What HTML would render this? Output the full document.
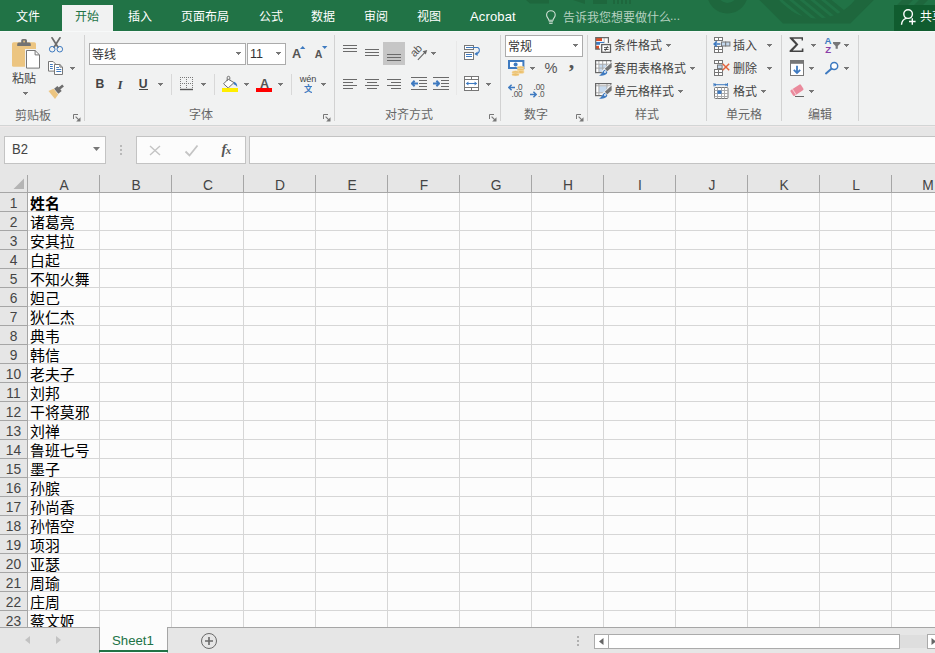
<!DOCTYPE html>
<html lang="zh-CN"><head><meta charset="utf-8"><title>Excel</title><style>
html,body{margin:0;padding:0}
html{width:935px;height:653px;overflow:hidden}
body{width:935px;height:653px;overflow:hidden;position:relative;background:#fff;font-family:"Liberation Sans",sans-serif}
#app{position:absolute;left:0;top:0;width:935px;height:653px;overflow:hidden}
.a{position:absolute;display:block}
.t{white-space:nowrap;line-height:1.15}
.ar{position:absolute;width:1px;height:1px;background:#777;box-shadow:-2px -2px #777,-1px -2px #777,0 -2px #777,1px -2px #777,2px -2px #777,-1px -1px #777,0 -1px #777,1px -1px #777}
.hc{width:40px;text-align:center;font-size:14.67px;color:#444;line-height:18px;transform:scaleX(.94)}
.rn{left:0;width:27px;text-align:center;font-size:14.67px;color:#444;line-height:18px;transform:scaleX(.94)}
.g{font-family:"Liberation Sans","Noto Sans CJK SC",sans-serif;font-size:1000px}
.gb{font-family:"Liberation Sans","Noto Sans CJK SC",sans-serif;font-size:1000px;font-weight:bold}
</style></head><body>
<div id="app">
<div class="a" style="left:0px;top:0px;width:935px;height:31px;background:#217346;"></div>
<svg class="a" style="left:500px;top:0px;" width="435" height="31" viewBox="0 0 435 31"><clipPath id="dc"><circle cx="317" cy="-29.6" r="48"/></clipPath><path d="M259.4 0L283 23.6H350.3L373.9 0Z" fill="#1e673d"/><path d="M278.2 0h4.5l30.7 25h-4.5zM288.9 0h4.5l30.7 25h-4.5zM299.6 0h4.5l30.7 25h-4.5zM310.3 0h4.5l30.7 25h-4.5zM321.0 0h4.5l30.7 25h-4.5zM331.6 0H400V25H362.3z" fill="#217346" clip-path="url(#dc)"/><circle cx="227.5" cy="-7" r="15.2" fill="none" stroke="#1e673d" stroke-width="10.5"/><g fill="#1e673d"><path d="M26 0h23v3.5H30z"/><path d="M73 0h12v4z"/><path d="M93 0h14v4H93z"/><path d="M113 0h2v4h-2zM117 0h2v4h-2zM121 0h2v4h-2zM125 0h2v4h-2zM129 0h2v4h-2z"/><path d="M402 0h11l-5 5h-11zM419 0h9l-5 5h-9z"/></g></svg>
<div class="a" style="left:62px;top:5px;width:51px;height:26px;background:#f1f2f2;"></div>
<svg class="a" role="img" aria-label="文件" style="left:16px;top:10.1px;" width="24.00" height="12.00" viewBox="0 0 2000 1000" fill="#fff"><text class="g" x="0" y="880">文件</text></svg>
<svg class="a" role="img" aria-label="开始" style="left:75px;top:10.1px;" width="24.00" height="12.00" viewBox="0 0 2000 1000" fill="#217346"><text class="g" x="0" y="880">开始</text></svg>
<svg class="a" role="img" aria-label="插入" style="left:128px;top:10.1px;" width="24.00" height="12.00" viewBox="0 0 2000 1000" fill="#fff"><text class="g" x="0" y="880">插入</text></svg>
<svg class="a" role="img" aria-label="页面布局" style="left:180.5px;top:10.1px;" width="48.00" height="12.00" viewBox="0 0 4000 1000" fill="#fff"><text class="g" x="0" y="880">页面布局</text></svg>
<svg class="a" role="img" aria-label="公式" style="left:258.5px;top:10.1px;" width="24.00" height="12.00" viewBox="0 0 2000 1000" fill="#fff"><text class="g" x="0" y="880">公式</text></svg>
<svg class="a" role="img" aria-label="数据" style="left:311px;top:10.1px;" width="24.00" height="12.00" viewBox="0 0 2000 1000" fill="#fff"><text class="g" x="0" y="880">数据</text></svg>
<svg class="a" role="img" aria-label="审阅" style="left:364px;top:10.1px;" width="24.00" height="12.00" viewBox="0 0 2000 1000" fill="#fff"><text class="g" x="0" y="880">审阅</text></svg>
<svg class="a" role="img" aria-label="视图" style="left:417px;top:10.1px;" width="24.00" height="12.00" viewBox="0 0 2000 1000" fill="#fff"><text class="g" x="0" y="880">视图</text></svg>
<span class="a t" style="left:470px;top:9.8px;font-size:13px;color:#fff;letter-spacing:.15px">Acrobat</span>
<svg class="a" role="img" aria-label="告诉我您想要做什么" style="left:563px;top:11px;" width="108.00" height="12.00" viewBox="0 0 9000 1000" fill="#b6d1c0"><text class="g" x="0" y="880">告诉我您想要做什么</text></svg>
<span class="a t" style="left:670px;top:10px;font-size:12px;color:#b6d1c0;">...</span>
<div class="a" style="left:894px;top:5px;width:41px;height:26px;background:#105c2f;"></div>
<svg class="a" role="img" aria-label="共享" style="left:920px;top:10px;" width="24.00" height="12.00" viewBox="0 0 2000 1000" fill="#fff"><text class="g" x="0" y="880">共享</text></svg>
<div class="a" style="left:0px;top:31px;width:935px;height:94px;background:#f1f2f2;"></div>
<div class="a" style="left:0px;top:31px;width:935px;height:1px;background:#f7f9f9;"></div>
<div class="a" style="left:0px;top:125px;width:935px;height:1px;background:#d3d5d5;"></div>
<div class="a" style="left:84px;top:35px;width:1px;height:86px;background:#d2d2d2;"></div>
<div class="a" style="left:334px;top:35px;width:1px;height:86px;background:#d2d2d2;"></div>
<div class="a" style="left:500px;top:35px;width:1px;height:86px;background:#d2d2d2;"></div>
<div class="a" style="left:587px;top:35px;width:1px;height:86px;background:#d2d2d2;"></div>
<div class="a" style="left:706px;top:35px;width:1px;height:86px;background:#d2d2d2;"></div>
<div class="a" style="left:781px;top:35px;width:1px;height:86px;background:#d2d2d2;"></div>
<div class="a" style="left:858px;top:35px;width:1px;height:86px;background:#d2d2d2;"></div>
<div class="a" style="left:171px;top:74px;width:1px;height:21px;background:#d8d8d8;"></div>
<div class="a" style="left:214px;top:74px;width:1px;height:21px;background:#d8d8d8;"></div>
<div class="a" style="left:291px;top:74px;width:1px;height:21px;background:#d8d8d8;"></div>
<div class="a" style="left:456px;top:41px;width:1px;height:54px;background:#e8e8e8;"></div>
<svg class="a" style="left:10px;top:37px;" width="32" height="33" viewBox="0 0 32 33"><rect x="2" y="5.3" width="24" height="24.5" rx="1.6" fill="#ecc581"/><path d="M11.2 5.6V3.6a1.6 1.6 0 0 1 1.6-1.6h2.6a1.6 1.6 0 0 1 1.6 1.6V5.6h2.2a1.6 1.6 0 0 1 1.6 1.6V9H7.2V7.2a1.6 1.6 0 0 1 1.6-1.6z" fill="#737373"/><rect x="13.3" y="3.6" width="1.6" height="1.8" fill="#ecc581"/><path d="M15 12h10.8l5.2 5.2V32.6H15z" fill="#f1f2f2"/><path d="M16.5 13.5h8.6l4.400 4.400V31.100H16.500z" fill="#fff" stroke="#777" stroke-width="1"/><path d="M25.100 13.500v4.400h4.400" fill="none" stroke="#777" stroke-width="1"/></svg>
<svg class="a" role="img" aria-label="粘贴" style="left:12px;top:72.4px;" width="24.00" height="12.00" viewBox="0 0 2000 1000" fill="#444"><text class="g" x="0" y="880">粘贴</text></svg>
<i class="ar" style="left:25px;top:94px"></i>
<svg class="a" style="left:47px;top:36px;" width="18" height="18" viewBox="0 0 18 18"><path d="M5 1.8L11 11.200M13 1.800L7 11.200" stroke="#6d6d6d" stroke-width="1.700" fill="none" stroke-linecap="round"/><circle cx="5.200" cy="13.200" r="2.800" fill="none" stroke="#3e7ac0" stroke-width="1"/><circle cx="12.800" cy="13.200" r="2.800" fill="none" stroke="#3e7ac0" stroke-width="1"/></svg>
<svg class="a" style="left:47px;top:60px;" width="18" height="16" viewBox="0 0 18 16"><path d="M1.500 1.500h4.600l2 2v7.600H1.500z" fill="#fff" stroke="#777"/><path d="M3 4.500h2.800M3 6.500h2.800M3 8.500h2.800" stroke="#3e7ac0" stroke-width="1"/><path d="M7.500 4.500h5.400l2.600 2.600v7.400H7.500z" fill="#fff" stroke="#777"/><path d="M12.900 4.500v2.600h2.600" fill="none" stroke="#777"/><path d="M9.300 7.500h2.700M9.300 9.500h5M9.300 11.500h5" stroke="#3e7ac0" stroke-width="1"/></svg>
<i class="ar" style="left:72px;top:69px"></i>
<svg class="a" style="left:47px;top:82px;" width="20" height="18" viewBox="0 0 20 18"><g transform="rotate(-40 10 9)"><rect x="13" y="7.400" width="5.200" height="2.600" fill="#6d6d6d"/><rect x="9.200" y="5.400" width="4.400" height="6.600" fill="#6d6d6d"/><path d="M8.800 5L3.400 3.600v10.200l5.400-1.400z" fill="#ecc581"/></g></svg>
<svg class="a" role="img" aria-label="剪贴板" style="left:15.4px;top:108.6px;" width="36.00" height="12.00" viewBox="0 0 3000 1000" fill="#666"><text class="g" x="0" y="880">剪贴板</text></svg>
<svg class="a" style="left:73px;top:114px;" width="8" height="8" viewBox="0 0 8 8"><path d="M0.5 5V0.5H5" fill="none" stroke="#777" stroke-width="1"/><path d="M2.6 2.6L6.6 6.6" stroke="#777" stroke-width="1.1"/><path d="M7.5 3.2V7.5H3.2z" fill="#777"/></svg>
<div class="a" style="left:89px;top:43px;width:157px;height:22px;background:#fff;border:1px solid #ababab;box-sizing:border-box"></div>
<div class="a" style="left:247px;top:43px;width:39px;height:22px;background:#fff;border:1px solid #ababab;box-sizing:border-box"></div>
<svg class="a" role="img" aria-label="等线" style="left:92px;top:47.8px;" width="24.00" height="12.00" viewBox="0 0 2000 1000" fill="#333"><text class="g" x="0" y="880">等线</text></svg>
<i class="ar" style="left:238px;top:54px"></i>
<span class="a t" style="left:250px;top:46.5px;font-size:12.6px;color:#333;">11</span>
<i class="ar" style="left:278px;top:54px"></i>
<span class="a t" style="left:291.6px;top:45.5px;font-size:13.4px;color:#555;font-weight:bold;transform:scaleX(.95);transform-origin:0 0">A</span>
<svg class="a" style="left:300px;top:46px;" width="6" height="3" viewBox="0 0 6 3"><path d="M0 3h5.4L2.7 0z" fill="#3e7ac0"/></svg>
<span class="a t" style="left:314.8px;top:48.4px;font-size:10.6px;color:#555;font-weight:bold">A</span>
<svg class="a" style="left:321.6px;top:46px;" width="6" height="3" viewBox="0 0 6 3"><path d="M0 0h5.4L2.7 3z" fill="#3e7ac0"/></svg>
<span class="a t" style="left:95.6px;top:77.4px;font-size:12.2px;color:#444;font-weight:bold">B</span>
<span class="a" style="left:117.6px;top:77px;font:italic bold 13px 'Liberation Serif',serif;color:#444">I</span>
<span class="a t" style="left:138.8px;top:77.4px;font-size:12.2px;color:#444;font-weight:bold">U</span>
<div class="a" style="left:139px;top:89px;width:9px;height:1px;background:#444;"></div>
<i class="ar" style="left:160px;top:85px"></i>
<svg class="a" style="left:180px;top:76px;" width="14" height="15" viewBox="0 0 14 15"><g stroke="#7a7a7a" stroke-width="1" stroke-dasharray="1 1" fill="none"><path d="M0 1.5h13M0 7.5h13M0.5 1v12M6.5 1v12M12.5 1v12"/></g><path d="M0 13.5h13" stroke="#555" stroke-width="1.4"/></svg>
<i class="ar" style="left:203px;top:85px"></i>
<svg class="a" style="left:221px;top:75px;" width="19" height="14" viewBox="0 0 19 14"><path d="M7.2 4.2L2.6 8.8l4.600 4.200l5.800-5.400z" fill="#fff" stroke="#6d6d6d" stroke-width="1"/><path d="M6.200 6V2.600a1.300 1.300 0 0 1 2.600 0V4.600" fill="none" stroke="#6d6d6d" stroke-width="1"/><path d="M13 6.800c2 .6 3.400 2.200 3.200 5.200c-1-1.600-2-2.400-3.600-2.800z" fill="#3e7ac0"/></svg>
<div class="a" style="left:222px;top:88px;width:16px;height:4px;background:#ffee00;"></div>
<i class="ar" style="left:246px;top:85px"></i>
<span class="a t" style="left:259.6px;top:76.2px;font-size:13.2px;color:#555;font-weight:bold;transform:scaleX(.95);transform-origin:0 0">A</span>
<div class="a" style="left:256px;top:88px;width:16px;height:4px;background:#f00;"></div>
<i class="ar" style="left:280px;top:85px"></i>
<span class="a t" style="left:299.8px;top:73.8px;font-size:9.2px;color:#444;letter-spacing:-.1px">wén</span>
<svg class="a" role="img" aria-label="文" style="left:303.6px;top:84.2px;" width="8.60" height="8.60" viewBox="0 0 1000 1000" fill="#3e7ac0"><text class="gb" x="0" y="880">文</text></svg>
<i class="ar" style="left:323px;top:85px"></i>
<svg class="a" role="img" aria-label="字体" style="left:189.2px;top:108.2px;" width="24.00" height="12.00" viewBox="0 0 2000 1000" fill="#666"><text class="g" x="0" y="880">字体</text></svg>
<svg class="a" style="left:323px;top:114px;" width="8" height="8" viewBox="0 0 8 8"><path d="M0.5 5V0.5H5" fill="none" stroke="#777" stroke-width="1"/><path d="M2.6 2.6L6.6 6.6" stroke="#777" stroke-width="1.1"/><path d="M7.5 3.2V7.5H3.2z" fill="#777"/></svg>
<div class="a" style="left:343px;top:45px;width:14px;height:1px;background:#6a6a6a;"></div>
<div class="a" style="left:343px;top:48px;width:14px;height:1px;background:#6a6a6a;"></div>
<div class="a" style="left:343px;top:51px;width:14px;height:1px;background:#6a6a6a;"></div>
<div class="a" style="left:365px;top:49px;width:14px;height:1px;background:#6a6a6a;"></div>
<div class="a" style="left:365px;top:52px;width:14px;height:1px;background:#6a6a6a;"></div>
<div class="a" style="left:365px;top:55px;width:14px;height:1px;background:#6a6a6a;"></div>
<div class="a" style="left:383px;top:42px;width:22px;height:23px;background:#c6c6c6;"></div>
<div class="a" style="left:387px;top:54px;width:14px;height:1px;background:#6a6a6a;"></div>
<div class="a" style="left:387px;top:57px;width:14px;height:1px;background:#6a6a6a;"></div>
<div class="a" style="left:387px;top:60px;width:14px;height:1px;background:#6a6a6a;"></div>
<svg class="a" style="left:409px;top:43px;" width="21" height="19" viewBox="0 0 21 19"><text x="0" y="0" transform="translate(5.4 14.4) rotate(-45)" font-family="Liberation Sans,sans-serif" font-size="11" fill="#555" letter-spacing="-.4">ab</text><path d="M8.900 16.800L16.800 8.400" stroke="#666" stroke-width="1.100" fill="none"/><path d="M18.200 6.900l-4.600 1.400l3.200 3.200z" fill="#666"/></svg>
<i class="ar" style="left:433px;top:54px"></i>
<div class="a" style="left:343px;top:79px;width:14px;height:1px;background:#6a6a6a;"></div>
<div class="a" style="left:365px;top:79px;width:14px;height:1px;background:#6a6a6a;"></div>
<div class="a" style="left:387px;top:79px;width:14px;height:1px;background:#6a6a6a;"></div>
<div class="a" style="left:343px;top:82px;width:10px;height:1px;background:#6a6a6a;"></div>
<div class="a" style="left:367px;top:82px;width:10px;height:1px;background:#6a6a6a;"></div>
<div class="a" style="left:391px;top:82px;width:10px;height:1px;background:#6a6a6a;"></div>
<div class="a" style="left:343px;top:85px;width:14px;height:1px;background:#6a6a6a;"></div>
<div class="a" style="left:365px;top:85px;width:14px;height:1px;background:#6a6a6a;"></div>
<div class="a" style="left:387px;top:85px;width:14px;height:1px;background:#6a6a6a;"></div>
<div class="a" style="left:343px;top:88px;width:10px;height:1px;background:#6a6a6a;"></div>
<div class="a" style="left:367px;top:88px;width:10px;height:1px;background:#6a6a6a;"></div>
<div class="a" style="left:391px;top:88px;width:10px;height:1px;background:#6a6a6a;"></div>
<div class="a" style="left:411px;top:77px;width:16px;height:1px;background:#6a6a6a;"></div><div class="a" style="left:411px;top:89px;width:16px;height:1px;background:#6a6a6a;"></div><div class="a" style="left:419px;top:80px;width:8px;height:1px;background:#6a6a6a;"></div><div class="a" style="left:419px;top:83px;width:8px;height:1px;background:#6a6a6a;"></div><div class="a" style="left:419px;top:86px;width:8px;height:1px;background:#6a6a6a;"></div><svg class="a" style="left:411px;top:80px;" width="7" height="7" viewBox="0 0 7 7"><path d="M7 3.5H1.400M3.600 0.800L0.800 3.500L3.600 6.200" fill="none" stroke="#3e7ac0" stroke-width="2"/></svg>
<div class="a" style="left:433px;top:77px;width:16px;height:1px;background:#6a6a6a;"></div><div class="a" style="left:433px;top:89px;width:16px;height:1px;background:#6a6a6a;"></div><div class="a" style="left:441px;top:80px;width:8px;height:1px;background:#6a6a6a;"></div><div class="a" style="left:441px;top:83px;width:8px;height:1px;background:#6a6a6a;"></div><div class="a" style="left:441px;top:86px;width:8px;height:1px;background:#6a6a6a;"></div><svg class="a" style="left:433px;top:80px;" width="7" height="7" viewBox="0 0 7 7"><path d="M0 3.5h5.600M3.400 0.800L6.200 3.500L3.400 6.200" fill="none" stroke="#3e7ac0" stroke-width="2"/></svg>
<svg class="a" style="left:463px;top:44px;" width="18" height="17" viewBox="0 0 18 17"><rect x="1.5" y="1.5" width="9" height="4" fill="#fff" stroke="#777"/><rect x="1.5" y="8.5" width="9" height="7" fill="#fff" stroke="#777"/><path d="M3 3.5H15M3 10.500h6M3 12.500h6" stroke="#3e7ac0" stroke-width="1"/><path d="M15 3.500c2.200 1.500 2 6-2.400 6.400" fill="none" stroke="#3e7ac0" stroke-width="1.100"/><path d="M11.400 10l3.200-2.400v4.400z" fill="#3e7ac0"/></svg>
<svg class="a" style="left:464px;top:76px;" width="15" height="15" viewBox="0 0 15 15"><rect x="0.5" y="0.5" width="14" height="14" fill="#fff" stroke="#777"/><path d="M0.5 3.5h14M0.500 11.500h14M7.500 0.500v3M7.500 11.500v3" stroke="#777" fill="none"/><path d="M2.600 7.500h9.800" stroke="#3e7ac0" stroke-width="1.100"/><path d="M1.800 7.500l2.600-2v4zM13.200 7.500l-2.600-2v4z" fill="#3e7ac0"/></svg>
<i class="ar" style="left:488px;top:85px"></i>
<svg class="a" role="img" aria-label="对齐方式" style="left:385px;top:108.2px;" width="48.00" height="12.00" viewBox="0 0 4000 1000" fill="#666"><text class="g" x="0" y="880">对齐方式</text></svg>
<svg class="a" style="left:489px;top:114px;" width="8" height="8" viewBox="0 0 8 8"><path d="M0.5 5V0.5H5" fill="none" stroke="#777" stroke-width="1"/><path d="M2.6 2.6L6.6 6.6" stroke="#777" stroke-width="1.1"/><path d="M7.5 3.2V7.5H3.2z" fill="#777"/></svg>
<div class="a" style="left:505px;top:35px;width:78px;height:22px;background:#fff;border:1px solid #ababab;box-sizing:border-box"></div>
<svg class="a" role="img" aria-label="常规" style="left:508.4px;top:39.6px;" width="24.00" height="12.00" viewBox="0 0 2000 1000" fill="#333"><text class="g" x="0" y="880">常规</text></svg>
<i class="ar" style="left:575px;top:46px"></i>
<svg class="a" style="left:508px;top:60px;" width="17" height="17" viewBox="0 0 17 17"><rect x="1" y="1" width="14.400" height="7" fill="#fff" stroke="#3e7ac0" stroke-width="2"/><circle cx="7.600" cy="4.400" r="2" fill="#3e7ac0"/><g fill="#ebc06d" stroke="#f6e3bd" stroke-width=".5"><ellipse cx="12.600" cy="7.600" rx="3.600" ry="1.500"/><ellipse cx="12.600" cy="9.800" rx="3.600" ry="1.500"/><ellipse cx="12.600" cy="12" rx="3.600" ry="1.500"/><ellipse cx="7.500" cy="12.200" rx="3.600" ry="1.500"/><ellipse cx="7.500" cy="14.400" rx="3.600" ry="1.500"/></g></svg>
<i class="ar" style="left:532px;top:69px"></i>
<span class="a t" style="left:544.4px;top:60.2px;font-size:14.6px;color:#555;">%</span>
<span class="a" style="left:568.8px;top:50.3px;font:bold 22px 'Liberation Serif',serif;color:#555;line-height:1">,</span>
<span class="a t" style="left:502px;width:20.4px;text-align:right;top:82.6px;font-size:8.2px;color:#555;letter-spacing:-.2px">.0</span><span class="a t" style="left:502px;width:20.4px;text-align:right;top:89.8px;font-size:8.2px;color:#555;letter-spacing:-.2px">.00</span>
<svg class="a" style="left:508px;top:84px;" width="7" height="7" viewBox="0 0 7 7"><path d="M7 3.5H1.400M3.600 0.800L0.800 3.500L3.600 6.200" fill="none" stroke="#3e7ac0" stroke-width="1.500"/></svg>
<span class="a t" style="left:524px;width:20.4px;text-align:right;top:82.6px;font-size:8.2px;color:#555;letter-spacing:-.2px">.00</span><span class="a t" style="left:524px;width:20.4px;text-align:right;top:89.8px;font-size:8.2px;color:#555;letter-spacing:-.2px">.0</span>
<svg class="a" style="left:530px;top:91px;" width="7" height="7" viewBox="0 0 7 7"><path d="M0 3.5h5.600M3.400 0.800L6.200 3.500L3.400 6.200" fill="none" stroke="#3e7ac0" stroke-width="1.500"/></svg>
<svg class="a" role="img" aria-label="数字" style="left:524.3px;top:108.2px;" width="24.00" height="12.00" viewBox="0 0 2000 1000" fill="#666"><text class="g" x="0" y="880">数字</text></svg>
<svg class="a" style="left:576px;top:114px;" width="8" height="8" viewBox="0 0 8 8"><path d="M0.5 5V0.5H5" fill="none" stroke="#777" stroke-width="1"/><path d="M2.6 2.6L6.6 6.6" stroke="#777" stroke-width="1.1"/><path d="M7.5 3.2V7.5H3.2z" fill="#777"/></svg>
<svg class="a" style="left:594px;top:36px;" width="18" height="18" viewBox="0 0 18 18"><rect x="1.7" y="1.7" width="12.8" height="11.6" fill="#fff"/><path d="M10.2 2v5M2 7.400h12" stroke="#c4c4c4" stroke-width="1" fill="none"/><rect x="2" y="2" width="6" height="3" fill="#e04e26"/><rect x="2" y="5.9" width="8.200" height="2.900" fill="#3e7ac0"/><rect x="2" y="9.8" width="3" height="3.300" fill="#e04e26"/><path d="M14.4 8.600V1.700H1.700V13.200H7.600" fill="none" stroke="#686868" stroke-width="1.200"/><rect x="6" y="7" width="12" height="11" fill="#f1f2f2"/><rect x="7.7" y="8.6" width="8.800" height="7.700" fill="#fff" stroke="#606060" stroke-width="1.300"/><path d="M10 11.6h4.600M10 13.500h4.600M13.500 10.200l-2.300 4.600" stroke="#444" stroke-width="0.900" fill="none"/></svg>
<svg class="a" style="left:594px;top:59px;" width="19" height="18" viewBox="0 0 19 18"><rect x="1.6" y="1.6" width="15.4" height="12" fill="#fff"/><rect x="5" y="5" width="8" height="8" fill="#c5d9ee"/><path d="M4.9 2v11M8.700 2v11M12.500 2v11M2 5.200h15M2 9.100h15" stroke="#ababab" stroke-width="1" fill="none"/><rect x="1.6" y="1.6" width="15.4" height="12" fill="none" stroke="#686868" stroke-width="1.200"/><path d="M18.5 1.400V15.500H7.600L8 11.600Z" fill="#f1f2f2"/><path d="M17.6 3.600V8.400L13.200 12.200L10.800 9.800Z" fill="#737373"/><path d="M10.3 10.700C8.400 12.400 7.600 15.200 5 16.700C9.400 17 13.200 15.600 13.300 12.900Z" fill="#3e7ac0"/><circle cx="11" cy="13" r="0.9" fill="#fff"/></svg>
<svg class="a" style="left:594px;top:82px;" width="19" height="18" viewBox="0 0 19 18"><rect x="1.6" y="1.6" width="15.4" height="12" fill="#fff"/><rect x="5" y="4.2" width="8" height="6.200" fill="#c5d9ee"/><path d="M4.9 2v11M13 2v11M2 3.800h15M2 10.800h15" stroke="#ababab" stroke-width="1" fill="none"/><rect x="1.6" y="1.6" width="15.4" height="12" fill="none" stroke="#686868" stroke-width="1.200"/><path d="M18.5 1.400V15.500H7.600L8 11.600Z" fill="#f1f2f2"/><path d="M17.6 3.600V8.400L13.200 12.200L10.800 9.800Z" fill="#737373"/><path d="M10.3 10.700C8.400 12.400 7.600 15.200 5 16.700C9.400 17 13.200 15.600 13.300 12.900Z" fill="#3e7ac0"/><circle cx="11" cy="13" r="0.9" fill="#fff"/></svg>
<svg class="a" role="img" aria-label="条件格式" style="left:614.2px;top:39.2px;" width="48.00" height="12.00" viewBox="0 0 4000 1000" fill="#444"><text class="g" x="0" y="880">条件格式</text></svg>
<i class="ar" style="left:668px;top:46px"></i>
<svg class="a" role="img" aria-label="套用表格格式" style="left:614.2px;top:62.2px;" width="72.00" height="12.00" viewBox="0 0 6000 1000" fill="#444"><text class="g" x="0" y="880">套用表格格式</text></svg>
<i class="ar" style="left:692px;top:69px"></i>
<svg class="a" role="img" aria-label="单元格样式" style="left:614.2px;top:85.2px;" width="60.00" height="12.00" viewBox="0 0 5000 1000" fill="#444"><text class="g" x="0" y="880">单元格样式</text></svg>
<i class="ar" style="left:680px;top:92px"></i>
<svg class="a" role="img" aria-label="样式" style="left:635.4px;top:108.2px;" width="24.00" height="12.00" viewBox="0 0 2000 1000" fill="#666"><text class="g" x="0" y="880">样式</text></svg>
<svg class="a" style="left:713px;top:37px;" width="18" height="16" viewBox="0 0 18 16"><g fill="#fff" stroke="#777"><rect x="1.5" y="0.5" width="4" height="3"/><rect x="5.5" y="0.5" width="4" height="3"/><rect x="1.5" y="9.5" width="4" height="3"/><rect x="5.5" y="9.5" width="4" height="3"/><rect x="1.5" y="12.5" width="4" height="3"/><rect x="5.5" y="12.5" width="4" height="3"/></g><g fill="#c3d7ec" stroke="#777"><rect x="8.5" y="5" width="4.200" height="4"/><rect x="12.700" y="5" width="4.200" height="4"/></g><path d="M7.4 7H1.600M3.800 4.400L1.200 7l2.600 2.600" fill="none" stroke="#3e7ac0" stroke-width="1.600"/></svg>
<svg class="a" role="img" aria-label="插入" style="left:733.2px;top:39.2px;" width="24.00" height="12.00" viewBox="0 0 2000 1000" fill="#444"><text class="g" x="0" y="880">插入</text></svg>
<i class="ar" style="left:769px;top:46px"></i>
<svg class="a" style="left:713px;top:60px;" width="18" height="16" viewBox="0 0 18 16"><g fill="#fff" stroke="#777"><rect x="1.5" y="0.5" width="4" height="3"/><rect x="5.5" y="0.5" width="4" height="3"/><rect x="1.5" y="9.5" width="4" height="3"/><rect x="5.5" y="9.5" width="4" height="3"/><rect x="1.5" y="12.5" width="4" height="3"/><rect x="5.5" y="12.5" width="4" height="3"/></g><rect x="4.5" y="5" width="4.600" height="3.600" fill="#c3d7ec" stroke="#777"/><path d="M9.600 3.800l6.600 6.400M16.200 3.800l-6.600 6.400" stroke="#e2633c" stroke-width="1.500" fill="none"/></svg>
<svg class="a" role="img" aria-label="删除" style="left:733.2px;top:62.2px;" width="24.00" height="12.00" viewBox="0 0 2000 1000" fill="#444"><text class="g" x="0" y="880">删除</text></svg>
<i class="ar" style="left:769px;top:69px"></i>
<svg class="a" style="left:713px;top:83px;" width="17" height="17" viewBox="0 0 17 17"><path d="M1 1.7h13.400M1 0v3.400M14.400 0v3.400" stroke="#3e7ac0" stroke-width="1" fill="none"/><path d="M1 1.7l2-1.500v3zM14.400 1.700l-2-1.500v3z" fill="#3e7ac0"/><rect x="1.5" y="4.5" width="13.500" height="11" rx="1" fill="#fff" stroke="#777"/><path d="M4.5 4.500v11M8.500 4.500v11M11.500 4.500v11M1.500 7.500h13.500M1.500 10.500h13.500M1.500 13.500h13.500" stroke="#aaa" fill="none"/><rect x="4.5" y="7.500" width="4" height="3.400" fill="#3e7ac0"/></svg>
<svg class="a" role="img" aria-label="格式" style="left:733.2px;top:85.2px;" width="24.00" height="12.00" viewBox="0 0 2000 1000" fill="#444"><text class="g" x="0" y="880">格式</text></svg>
<i class="ar" style="left:763px;top:92px"></i>
<svg class="a" role="img" aria-label="单元格" style="left:726.2px;top:108.2px;" width="36.00" height="12.00" viewBox="0 0 3000 1000" fill="#666"><text class="g" x="0" y="880">单元格</text></svg>
<svg class="a" style="left:789px;top:37px;" width="16" height="16" viewBox="0 0 16 16"><path d="M0.6 0.200H14v3.200h-1.400V1.800H4.200l5.200 5.600l-5.600 6h9v-1.800h1.600v3.400H0.600v-1.400l6-6.200l-6-6.200z" fill="#444"/></svg>
<i class="ar" style="left:813px;top:46px"></i>
<span class="a t" style="left:824.6px;top:34.6px;font-size:9.6px;color:#3e7ac0;font-weight:bold">A</span>
<span class="a t" style="left:825.2px;top:44.2px;font-size:9.6px;color:#8b3fa8;font-weight:bold">Z</span>
<svg class="a" style="left:833px;top:42px;" width="8" height="7" viewBox="0 0 8 7"><path d="M0 0h7.400v1.400L4.800 4v2.800H2.600V4L0 1.400z" fill="#777"/></svg>
<i class="ar" style="left:846px;top:46px"></i>
<svg class="a" style="left:790px;top:60px;" width="14" height="16" viewBox="0 0 14 16"><rect x="0.5" y="0.5" width="13" height="15" fill="#fff" stroke="#777"/><rect x="0" y="0" width="14" height="3.800" fill="#777"/><path d="M7 5.800v7M3.800 9.800L7 13l3.200-3.200" fill="none" stroke="#3e7ac0" stroke-width="1.800"/></svg>
<i class="ar" style="left:811px;top:69px"></i>
<svg class="a" style="left:824px;top:61px;" width="15" height="14" viewBox="0 0 15 14"><circle cx="10.2" cy="5" r="3.500" fill="#fff" stroke="#3e7ac0" stroke-width="1.500"/><path d="M7.400 7.800L2 12.400" stroke="#3e7ac0" stroke-width="2" stroke-linecap="round"/></svg>
<i class="ar" style="left:846px;top:69px"></i>
<svg class="a" style="left:789px;top:83px;" width="16" height="15" viewBox="0 0 16 15"><g transform="rotate(-33 8 7.6)"><rect x="2" y="3.8" width="12.400" height="6.800" rx="1.300" fill="#ea8a9c"/><rect x="4.400" y="3.800" width="1" height="6.800" fill="#f6ccd4"/></g><path d="M6 13.5h9" stroke="#666" stroke-width="1"/></svg>
<i class="ar" style="left:811px;top:92px"></i>
<svg class="a" role="img" aria-label="编辑" style="left:808.2px;top:108.2px;" width="24.00" height="12.00" viewBox="0 0 2000 1000" fill="#666"><text class="g" x="0" y="880">编辑</text></svg>
<svg class="a" style="left:899px;top:8px;" width="18" height="19" viewBox="0 0 18 19"><circle cx="9.1" cy="6.1" r="4.300" fill="none" stroke="#fff" stroke-width="1.400"/><path d="M2.5 16.800c0.300-4 2.600-6 5.200-6.400" fill="none" stroke="#fff" stroke-width="1.400"/><path d="M13.3 10.200v6.600M10 13.500h6.600" stroke="#fff" stroke-width="1.400"/></svg>
<svg class="a" style="left:545px;top:10px;" width="12" height="15" viewBox="0 0 12 15"><path d="M3.8 10.200c0-1.800-2.200-2.600-2.200-5.200a4.300 4.300 0 0 1 8.600 0c0 2.600-2.200 3.400-2.200 5.200z" fill="none" stroke="#cfe0d5" stroke-width="1.100"/><path d="M3.8 11.800h4.200M4.200 13.400h3.400" stroke="#cfe0d5" stroke-width="1"/></svg>
<div class="a" style="left:0px;top:126px;width:935px;height:49px;background:#e6e6e6;"></div>
<div class="a" style="left:0px;top:126px;width:935px;height:1px;background:#efe9e9;"></div>
<div class="a" style="left:4px;top:136px;width:102px;height:28px;background:#fcfcfc;border:1px solid #c3c3c3;box-sizing:border-box"></div>
<div class="a" style="left:136px;top:136px;width:110px;height:28px;background:#fcfcfc;border:1px solid #c3c3c3;box-sizing:border-box"></div>
<div class="a" style="left:249px;top:136px;width:700px;height:28px;background:#fcfcfc;border:1px solid #c3c3c3;box-sizing:border-box"></div>
<span class="a t" style="left:11.5px;top:140.5px;font-size:14.5px;color:#444;transform:scaleX(.9);transform-origin:0 0">B2</span>
<svg class="a" style="left:93px;top:147px;" width="7" height="4" viewBox="0 0 7 4"><path d="M0 0h7l-3.5 4z" fill="#777"/></svg>
<div class="a" style="left:120px;top:145px;width:2px;height:2px;background:#b9b9b9;"></div>
<div class="a" style="left:120px;top:149px;width:2px;height:2px;background:#b9b9b9;"></div>
<div class="a" style="left:120px;top:153px;width:2px;height:2px;background:#b9b9b9;"></div>
<svg class="a" style="left:149px;top:145px;" width="12" height="11" viewBox="0 0 12 11"><path d="M1 1l10 9M11 1l-10 9" stroke="#c4c4c4" stroke-width="1.4" fill="none"/></svg>
<svg class="a" style="left:184px;top:144px;" width="15" height="13" viewBox="0 0 15 13"><path d="M1.5 7.5l4 4l8-10" stroke="#c4c4c4" stroke-width="1.8" fill="none"/></svg>
<span class="a" style="left:221.5px;top:141.5px;font:italic bold 14.5px 'Liberation Serif',serif;color:#555;letter-spacing:-.6px;line-height:1.1">f<span style="font-size:11px">x</span></span>
<div class="a" style="left:0px;top:175px;width:935px;height:453px;background:#fcfcfc;"></div>
<div class="a" style="left:0px;top:175px;width:935px;height:17px;background:#e6e6e6;"></div>
<div class="a" style="left:0px;top:192px;width:27px;height:436px;background:#e6e6e6;"></div>
<div class="a" style="left:28px;top:211px;width:907px;height:1px;background:#d6d6d6;"></div>
<div class="a" style="left:28px;top:230px;width:907px;height:1px;background:#d6d6d6;"></div>
<div class="a" style="left:28px;top:249px;width:907px;height:1px;background:#d6d6d6;"></div>
<div class="a" style="left:28px;top:268px;width:907px;height:1px;background:#d6d6d6;"></div>
<div class="a" style="left:28px;top:287px;width:907px;height:1px;background:#d6d6d6;"></div>
<div class="a" style="left:28px;top:306px;width:907px;height:1px;background:#d6d6d6;"></div>
<div class="a" style="left:28px;top:325px;width:907px;height:1px;background:#d6d6d6;"></div>
<div class="a" style="left:28px;top:344px;width:907px;height:1px;background:#d6d6d6;"></div>
<div class="a" style="left:28px;top:363px;width:907px;height:1px;background:#d6d6d6;"></div>
<div class="a" style="left:28px;top:382px;width:907px;height:1px;background:#d6d6d6;"></div>
<div class="a" style="left:28px;top:401px;width:907px;height:1px;background:#d6d6d6;"></div>
<div class="a" style="left:28px;top:420px;width:907px;height:1px;background:#d6d6d6;"></div>
<div class="a" style="left:28px;top:439px;width:907px;height:1px;background:#d6d6d6;"></div>
<div class="a" style="left:28px;top:458px;width:907px;height:1px;background:#d6d6d6;"></div>
<div class="a" style="left:28px;top:477px;width:907px;height:1px;background:#d6d6d6;"></div>
<div class="a" style="left:28px;top:496px;width:907px;height:1px;background:#d6d6d6;"></div>
<div class="a" style="left:28px;top:515px;width:907px;height:1px;background:#d6d6d6;"></div>
<div class="a" style="left:28px;top:534px;width:907px;height:1px;background:#d6d6d6;"></div>
<div class="a" style="left:28px;top:553px;width:907px;height:1px;background:#d6d6d6;"></div>
<div class="a" style="left:28px;top:572px;width:907px;height:1px;background:#d6d6d6;"></div>
<div class="a" style="left:28px;top:591px;width:907px;height:1px;background:#d6d6d6;"></div>
<div class="a" style="left:28px;top:610px;width:907px;height:1px;background:#d6d6d6;"></div>
<div class="a" style="left:99px;top:193px;width:1px;height:435px;background:#d6d6d6;"></div>
<div class="a" style="left:171px;top:193px;width:1px;height:435px;background:#d6d6d6;"></div>
<div class="a" style="left:243px;top:193px;width:1px;height:435px;background:#d6d6d6;"></div>
<div class="a" style="left:315px;top:193px;width:1px;height:435px;background:#d6d6d6;"></div>
<div class="a" style="left:387px;top:193px;width:1px;height:435px;background:#d6d6d6;"></div>
<div class="a" style="left:459px;top:193px;width:1px;height:435px;background:#d6d6d6;"></div>
<div class="a" style="left:531px;top:193px;width:1px;height:435px;background:#d6d6d6;"></div>
<div class="a" style="left:603px;top:193px;width:1px;height:435px;background:#d6d6d6;"></div>
<div class="a" style="left:675px;top:193px;width:1px;height:435px;background:#d6d6d6;"></div>
<div class="a" style="left:747px;top:193px;width:1px;height:435px;background:#d6d6d6;"></div>
<div class="a" style="left:819px;top:193px;width:1px;height:435px;background:#d6d6d6;"></div>
<div class="a" style="left:891px;top:193px;width:1px;height:435px;background:#d6d6d6;"></div>
<div class="a" style="left:0px;top:192px;width:935px;height:1px;background:#a6a6a6;"></div>
<div class="a" style="left:27px;top:175px;width:1px;height:453px;background:#a6a6a6;"></div>
<div class="a" style="left:99px;top:175px;width:1px;height:17px;background:#a6a6a6;"></div>
<div class="a" style="left:171px;top:175px;width:1px;height:17px;background:#a6a6a6;"></div>
<div class="a" style="left:243px;top:175px;width:1px;height:17px;background:#a6a6a6;"></div>
<div class="a" style="left:315px;top:175px;width:1px;height:17px;background:#a6a6a6;"></div>
<div class="a" style="left:387px;top:175px;width:1px;height:17px;background:#a6a6a6;"></div>
<div class="a" style="left:459px;top:175px;width:1px;height:17px;background:#a6a6a6;"></div>
<div class="a" style="left:531px;top:175px;width:1px;height:17px;background:#a6a6a6;"></div>
<div class="a" style="left:603px;top:175px;width:1px;height:17px;background:#a6a6a6;"></div>
<div class="a" style="left:675px;top:175px;width:1px;height:17px;background:#a6a6a6;"></div>
<div class="a" style="left:747px;top:175px;width:1px;height:17px;background:#a6a6a6;"></div>
<div class="a" style="left:819px;top:175px;width:1px;height:17px;background:#a6a6a6;"></div>
<div class="a" style="left:891px;top:175px;width:1px;height:17px;background:#a6a6a6;"></div>
<div class="a" style="left:0px;top:211px;width:27px;height:1px;background:#a6a6a6;"></div>
<div class="a" style="left:0px;top:230px;width:27px;height:1px;background:#a6a6a6;"></div>
<div class="a" style="left:0px;top:249px;width:27px;height:1px;background:#a6a6a6;"></div>
<div class="a" style="left:0px;top:268px;width:27px;height:1px;background:#a6a6a6;"></div>
<div class="a" style="left:0px;top:287px;width:27px;height:1px;background:#a6a6a6;"></div>
<div class="a" style="left:0px;top:306px;width:27px;height:1px;background:#a6a6a6;"></div>
<div class="a" style="left:0px;top:325px;width:27px;height:1px;background:#a6a6a6;"></div>
<div class="a" style="left:0px;top:344px;width:27px;height:1px;background:#a6a6a6;"></div>
<div class="a" style="left:0px;top:363px;width:27px;height:1px;background:#a6a6a6;"></div>
<div class="a" style="left:0px;top:382px;width:27px;height:1px;background:#a6a6a6;"></div>
<div class="a" style="left:0px;top:401px;width:27px;height:1px;background:#a6a6a6;"></div>
<div class="a" style="left:0px;top:420px;width:27px;height:1px;background:#a6a6a6;"></div>
<div class="a" style="left:0px;top:439px;width:27px;height:1px;background:#a6a6a6;"></div>
<div class="a" style="left:0px;top:458px;width:27px;height:1px;background:#a6a6a6;"></div>
<div class="a" style="left:0px;top:477px;width:27px;height:1px;background:#a6a6a6;"></div>
<div class="a" style="left:0px;top:496px;width:27px;height:1px;background:#a6a6a6;"></div>
<div class="a" style="left:0px;top:515px;width:27px;height:1px;background:#a6a6a6;"></div>
<div class="a" style="left:0px;top:534px;width:27px;height:1px;background:#a6a6a6;"></div>
<div class="a" style="left:0px;top:553px;width:27px;height:1px;background:#a6a6a6;"></div>
<div class="a" style="left:0px;top:572px;width:27px;height:1px;background:#a6a6a6;"></div>
<div class="a" style="left:0px;top:591px;width:27px;height:1px;background:#a6a6a6;"></div>
<div class="a" style="left:0px;top:610px;width:27px;height:1px;background:#a6a6a6;"></div>
<svg class="a" style="left:13px;top:178px;" width="12" height="12" viewBox="0 0 12 12"><path d="M11 0.5V11H0.5z" fill="#b4b4b4"/></svg>
<span class="a t hc" style="left:43.5px;top:175.700px">A</span>
<span class="a t hc" style="left:115.5px;top:175.700px">B</span>
<span class="a t hc" style="left:187.5px;top:175.700px">C</span>
<span class="a t hc" style="left:259.5px;top:175.700px">D</span>
<span class="a t hc" style="left:331.5px;top:175.700px">E</span>
<span class="a t hc" style="left:403.5px;top:175.700px">F</span>
<span class="a t hc" style="left:475.5px;top:175.700px">G</span>
<span class="a t hc" style="left:547.5px;top:175.700px">H</span>
<span class="a t hc" style="left:619.5px;top:175.700px">I</span>
<span class="a t hc" style="left:691.5px;top:175.700px">J</span>
<span class="a t hc" style="left:763.5px;top:175.700px">K</span>
<span class="a t hc" style="left:835.5px;top:175.700px">L</span>
<span class="a t hc" style="left:907.5px;top:175.700px">M</span>
<span class="a t rn" style="top:194.4px">1</span>
<svg class="a" role="img" aria-label="姓名" style="left:29.9px;top:196.2px;" width="29.80" height="14.90" viewBox="0 0 2000 1000" fill="#000"><text class="gb" x="0" y="880">姓名</text></svg>
<span class="a t rn" style="top:213.4px">2</span>
<svg class="a" role="img" aria-label="诸葛亮" style="left:29.9px;top:215.2px;" width="44.70" height="14.90" viewBox="0 0 3000 1000" fill="#000"><text class="g" x="0" y="880">诸葛亮</text></svg>
<span class="a t rn" style="top:232.4px">3</span>
<svg class="a" role="img" aria-label="安其拉" style="left:29.9px;top:234.2px;" width="44.70" height="14.90" viewBox="0 0 3000 1000" fill="#000"><text class="g" x="0" y="880">安其拉</text></svg>
<span class="a t rn" style="top:251.4px">4</span>
<svg class="a" role="img" aria-label="白起" style="left:29.9px;top:253.2px;" width="29.80" height="14.90" viewBox="0 0 2000 1000" fill="#000"><text class="g" x="0" y="880">白起</text></svg>
<span class="a t rn" style="top:270.4px">5</span>
<svg class="a" role="img" aria-label="不知火舞" style="left:29.9px;top:272.2px;" width="59.60" height="14.90" viewBox="0 0 4000 1000" fill="#000"><text class="g" x="0" y="880">不知火舞</text></svg>
<span class="a t rn" style="top:289.4px">6</span>
<svg class="a" role="img" aria-label="妲己" style="left:29.9px;top:291.2px;" width="29.80" height="14.90" viewBox="0 0 2000 1000" fill="#000"><text class="g" x="0" y="880">妲己</text></svg>
<span class="a t rn" style="top:308.4px">7</span>
<svg class="a" role="img" aria-label="狄仁杰" style="left:29.9px;top:310.2px;" width="44.70" height="14.90" viewBox="0 0 3000 1000" fill="#000"><text class="g" x="0" y="880">狄仁杰</text></svg>
<span class="a t rn" style="top:327.4px">8</span>
<svg class="a" role="img" aria-label="典韦" style="left:29.9px;top:329.2px;" width="29.80" height="14.90" viewBox="0 0 2000 1000" fill="#000"><text class="g" x="0" y="880">典韦</text></svg>
<span class="a t rn" style="top:346.4px">9</span>
<svg class="a" role="img" aria-label="韩信" style="left:29.9px;top:348.2px;" width="29.80" height="14.90" viewBox="0 0 2000 1000" fill="#000"><text class="g" x="0" y="880">韩信</text></svg>
<span class="a t rn" style="top:365.4px">10</span>
<svg class="a" role="img" aria-label="老夫子" style="left:29.9px;top:367.2px;" width="44.70" height="14.90" viewBox="0 0 3000 1000" fill="#000"><text class="g" x="0" y="880">老夫子</text></svg>
<span class="a t rn" style="top:384.4px">11</span>
<svg class="a" role="img" aria-label="刘邦" style="left:29.9px;top:386.2px;" width="29.80" height="14.90" viewBox="0 0 2000 1000" fill="#000"><text class="g" x="0" y="880">刘邦</text></svg>
<span class="a t rn" style="top:403.4px">12</span>
<svg class="a" role="img" aria-label="干将莫邪" style="left:29.9px;top:405.2px;" width="59.60" height="14.90" viewBox="0 0 4000 1000" fill="#000"><text class="g" x="0" y="880">干将莫邪</text></svg>
<span class="a t rn" style="top:422.4px">13</span>
<svg class="a" role="img" aria-label="刘禅" style="left:29.9px;top:424.2px;" width="29.80" height="14.90" viewBox="0 0 2000 1000" fill="#000"><text class="g" x="0" y="880">刘禅</text></svg>
<span class="a t rn" style="top:441.4px">14</span>
<svg class="a" role="img" aria-label="鲁班七号" style="left:29.9px;top:443.2px;" width="59.60" height="14.90" viewBox="0 0 4000 1000" fill="#000"><text class="g" x="0" y="880">鲁班七号</text></svg>
<span class="a t rn" style="top:460.4px">15</span>
<svg class="a" role="img" aria-label="墨子" style="left:29.9px;top:462.2px;" width="29.80" height="14.90" viewBox="0 0 2000 1000" fill="#000"><text class="g" x="0" y="880">墨子</text></svg>
<span class="a t rn" style="top:479.4px">16</span>
<svg class="a" role="img" aria-label="孙膑" style="left:29.9px;top:481.2px;" width="29.80" height="14.90" viewBox="0 0 2000 1000" fill="#000"><text class="g" x="0" y="880">孙膑</text></svg>
<span class="a t rn" style="top:498.4px">17</span>
<svg class="a" role="img" aria-label="孙尚香" style="left:29.9px;top:500.2px;" width="44.70" height="14.90" viewBox="0 0 3000 1000" fill="#000"><text class="g" x="0" y="880">孙尚香</text></svg>
<span class="a t rn" style="top:517.4px">18</span>
<svg class="a" role="img" aria-label="孙悟空" style="left:29.9px;top:519.2px;" width="44.70" height="14.90" viewBox="0 0 3000 1000" fill="#000"><text class="g" x="0" y="880">孙悟空</text></svg>
<span class="a t rn" style="top:536.4px">19</span>
<svg class="a" role="img" aria-label="项羽" style="left:29.9px;top:538.2px;" width="29.80" height="14.90" viewBox="0 0 2000 1000" fill="#000"><text class="g" x="0" y="880">项羽</text></svg>
<span class="a t rn" style="top:555.4px">20</span>
<svg class="a" role="img" aria-label="亚瑟" style="left:29.9px;top:557.2px;" width="29.80" height="14.90" viewBox="0 0 2000 1000" fill="#000"><text class="g" x="0" y="880">亚瑟</text></svg>
<span class="a t rn" style="top:574.4px">21</span>
<svg class="a" role="img" aria-label="周瑜" style="left:29.9px;top:576.2px;" width="29.80" height="14.90" viewBox="0 0 2000 1000" fill="#000"><text class="g" x="0" y="880">周瑜</text></svg>
<span class="a t rn" style="top:593.4px">22</span>
<svg class="a" role="img" aria-label="庄周" style="left:29.9px;top:595.2px;" width="29.80" height="14.90" viewBox="0 0 2000 1000" fill="#000"><text class="g" x="0" y="880">庄周</text></svg>
<span class="a t rn" style="top:612.4px">23</span>
<svg class="a" role="img" aria-label="蔡文姬" style="left:29.9px;top:614.2px;" width="44.70" height="14.90" viewBox="0 0 3000 1000" fill="#000"><text class="g" x="0" y="880">蔡文姬</text></svg>
<div class="a" style="left:0px;top:627px;width:935px;height:26px;background:#e6e6e6;"></div>
<div class="a" style="left:0px;top:627px;width:935px;height:1px;background:#a6a6a6;"></div>
<div class="a" style="left:99px;top:627px;width:69px;height:26px;background:#fcfcfc;border-left:1px solid #a6a6a6;border-right:1px solid #a6a6a6;box-sizing:border-box"></div>
<div class="a" style="left:99px;top:650px;width:69px;height:2px;background:#217346;"></div>
<span class="a t" style="left:112px;top:632.5px;font-size:13.2px;color:#217346;">Sheet1</span>
<svg class="a" style="left:24px;top:635px;" width="8" height="10" viewBox="0 0 8 10"><path d="M6 1L1 5l5 4z" fill="#c2c2c2"/></svg>
<svg class="a" style="left:54px;top:635px;" width="8" height="10" viewBox="0 0 8 10"><path d="M2 1l5 4l-5 4z" fill="#c2c2c2"/></svg>
<svg class="a" style="left:200px;top:632px;" width="18" height="18" viewBox="0 0 18 18"><circle cx="9" cy="9" r="7.5" fill="none" stroke="#6a6a6a" stroke-width="1"/><path d="M9 5v8M5 9h8" stroke="#6a6a6a" stroke-width="1.6"/></svg>
<div class="a" style="left:577px;top:636px;width:2px;height:2px;background:#b0b0b0;"></div>
<div class="a" style="left:577px;top:640px;width:2px;height:2px;background:#b0b0b0;"></div>
<div class="a" style="left:577px;top:644px;width:2px;height:2px;background:#b0b0b0;"></div>
<div class="a" style="left:594px;top:634px;width:15px;height:15px;background:#fff;border:1px solid #ababab;box-sizing:border-box"></div>
<svg class="a" style="left:599px;top:638px;" width="5" height="7" viewBox="0 0 5 7"><path d="M4.5 0v7L0 3.5z" fill="#666"/></svg>
<div class="a" style="left:608px;top:634px;width:292px;height:15px;background:#fff;border:1px solid #ababab;box-sizing:border-box"></div>
<div class="a" style="left:900px;top:635px;width:27px;height:13px;background:#dedede;"></div>
<div class="a" style="left:927px;top:634px;width:15px;height:15px;background:#fff;border:1px solid #ababab;box-sizing:border-box"></div>
<svg class="a" style="left:931px;top:638px;" width="5" height="7" viewBox="0 0 5 7"><path d="M0.5 0v7L5 3.5z" fill="#666"/></svg>
</div>
</body></html>
